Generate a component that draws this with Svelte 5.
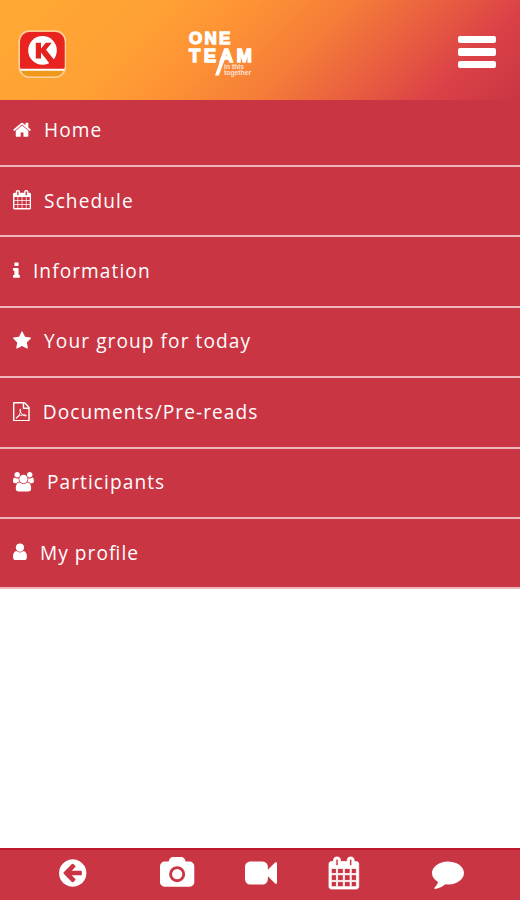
<script lang="ts">
  // Glyphs share a 1792-unit em; x and w give each one's advance box.
  type Icon = { x: number; w: number; d: string };

  const calendar: Icon = {
    x: 64,
    w: 1664,
    d: 'M192 1664h288v-288h-288v288zm352 0h320v-288h-320v288zm-352-352h288v-320h-288v320zm352 0h320v-320h-320v320zm-352-384h288v-288h-288v288zm736 736h320v-288h-320v288zm-384-736h320v-288h-320v288zm768 736h288v-288h-288v288zm-384-352h320v-320h-320v320zm-352-864v-288q0-13-9.5-22.5t-22.5-9.5h-64q-13 0-22.5 9.5t-9.5 22.5v288q0 13 9.5 22.5t22.5 9.5h64q13 0 22.5-9.5t9.5-22.5zm736 864h288v-320h-288v320zm-384-384h320v-288h-320v288zm384 0h288v-288h-288v288zm32-480v-288q0-13-9.5-22.5t-22.5-9.5h-64q-13 0-22.5 9.5t-9.5 22.5v288q0 13 9.5 22.5t22.5 9.5h64q13 0 22.5-9.5t9.5-22.5zm384-64v1280q0 52-38 90t-90 38h-1408q-52 0-90-38t-38-90v-1280q0-52 38-90t90-38h128v-96q0-66 47-113t113-47h64q66 0 113 47t47 113v96h384v-96q0-66 47-113t113-47h64q66 0 113 47t47 113v96h128q52 0 90 38t38 90z',
  };

  const items: { label: string; icon: Icon; squiggle?: string }[] = [
    {
      label: 'Home',
      icon: {
        x: 64,
        w: 1664,
        d: 'M1472 992v480q0 26-19 45t-45 19h-384v-384h-256v384h-384q-26 0-45-19t-19-45v-480q0-1 .5-3t.5-3l575-474 575 474q1 2 1 6zm223-69l-62 74q-8 9-21 11h-3q-13 0-21-7l-692-577-692 577q-12 8-24 7-13-2-21-11l-62-74q-8-10-7-23.5t11-21.5l719-599q32-26 76-26t76 26l244 204v-195q0-14 9-23t23-9h192q14 0 23 9t9 23v408l219 182q10 8 11 21.5t-7 23.5z',
      },
    },
    { label: 'Schedule', icon: calendar },
    {
      label: 'Information',
      icon: {
        x: 576,
        w: 640,
        d: 'M1216 1344v128q0 26-19 45t-45 19h-512q-26 0-45-19t-19-45v-128q0-26 19-45t45-19h64v-384h-64q-26 0-45-19t-19-45v-128q0-26 19-45t45-19h384q26 0 45 19t19 45v576h64q26 0 45 19t19 45zm-128-1152v192q0 26-19 45t-45 19h-256q-26 0-45-19t-19-45v-192q0-26 19-45t45-19h256q26 0 45 19t19 45z',
      },
    },
    {
      label: 'Your group for today',
      icon: {
        x: 64,
        w: 1664,
        d: 'M1728 647q0 22-26 48l-363 354 86 500q1 7 1 20 0 21-10.5 35.5t-30.5 14.5q-19 0-40-12l-449-236-449 236q-22 12-40 12-21 0-31.5-14.5t-10.5-35.5q0-6 2-20l86-500-364-354q-25-27-25-48 0-37 56-46l502-73 225-455q19-41 49-41t49 41l225 455 502 73q56 9 56 46z',
      },
    },
    {
      label: 'Documents/Pre-reads',
      icon: {
        x: 128,
        w: 1536,
        d: 'M1596 380q28 28 48 76t20 88v1152q0 40-28 68t-68 28h-1344q-40 0-68-28t-28-68v-1600q0-40 28-68t68-28h896q40 0 88 20t76 48zm-444-244v376h376q-10-29-22-41l-313-313q-12-12-41-22zm384 1528v-1024h-416q-40 0-68-28t-28-68v-416h-768v1536h1280z',
      },
      squiggle:
        'M440 1500C560 1470 860 960 830 720C820 620 750 640 760 740C780 960 1000 1240 1260 1280C1400 1300 1390 1190 1230 1180C960 1170 660 1250 480 1390C400 1460 400 1510 440 1500Z',
    },
    {
      label: 'Participants',
      icon: {
        x: 0,
        w: 1920,
        d: 'M593 896q-162 5-265 128h-134q-82 0-138-40.5t-56-118.5q0-353 124-353 6 0 43.5 21t97.5 42.5 119 21.5q67 0 133-23-5 37-5 66 0 139 81 256zm1071 637q0 120-73 189.5t-194 69.5h-874q-121 0-194-69.5t-73-189.5q0-53 3.5-103.5t14-109 26.5-108.5 43-97.5 62-81 85.5-53.5 111.5-20q10 0 43 21.5t73 48 107 48 135 21.5 135-21.5 107-48 73-48 43-21.5q61 0 111.5 20t85.5 53.5 62 81 43 97.5 26.5 108.5 14 109 3.5 103.5zm-1024-1277q0 106-75 181t-181 75-181-75-75-181 75-181 181-75 181 75 75 181zm704 384q0 159-112.5 271.5t-271.5 112.5-271.5-112.5-112.5-271.5 112.5-271.5 271.5-112.5 271.5 112.5 112.5 271.5zm576 225q0 78-56 118.5t-138 40.5h-134q-103-123-265-128 81-117 81-256 0-29-5-66 66 23 133 23 59 0 119-21.5t97.5-42.5 43.5-21q124 0 124 353zm-128-609q0 106-75 181t-181 75-181-75-75-181 75-181 181-75 181 75 75 181z',
      },
    },
    {
      label: 'My profile',
      icon: {
        x: 256,
        w: 1280,
        d: 'M1536 1399q0 109-62.5 187t-150.5 78h-854q-88 0-150.5-78t-62.5-187q0-85 8.5-160.5t31.5-152 58.5-131 94-89 134.5-34.5q131 128 313 128t313-128q76 0 134.5 34.5t94 89 58.5 131 31.5 152 8.5 160.5zm-256-887q0 159-112.5 271.5t-271.5 112.5-271.5-112.5-112.5-271.5 112.5-271.5 271.5-112.5 271.5 112.5 112.5 271.5z',
      },
    },
  ];

  const tabs: { name: string; icon: Icon }[] = [
    {
      name: 'back',
      icon: {
        x: 128,
        w: 1536,
        d: 'M1408 960v-128q0-26-19-45t-45-19h-502l189-189q19-19 19-45t-19-45l-91-91q-18-18-45-18t-45 18l-362 362-91 91q-18 18-18 45t18 45l91 91 362 362q18 18 45 18t45-18l91-91q18-18 18-45t-18-45l-189-189h502q26 0 45-19t19-45zm256-64q0 209-103 385.5t-279.5 279.5-385.5 103-385.5-103-279.5-279.5-103-385.5 103-385.5 279.5-279.5 385.5-103 385.5 103 279.5 279.5 103 385.5z',
      },
    },
    {
      name: 'camera',
      icon: {
        x: 0,
        w: 1920,
        d: 'M960 672q119 0 203.5 84.5t84.5 203.5-84.5 203.5-203.5 84.5-203.5-84.5-84.5-203.5 84.5-203.5 203.5-84.5zm704-416q106 0 181 75t75 181v896q0 106-75 181t-181 75h-1408q-106 0-181-75t-75-181v-896q0-106 75-181t181-75h224l51-136q19-49 69.5-84.5t103.5-35.5h512q53 0 103.5 35.5t69.5 84.5l51 136h224zm-704 1152q185 0 316.5-131.5t131.5-316.5-131.5-316.5-316.5-131.5-316.5 131.5-131.5 316.5 131.5 316.5 316.5 131.5z',
      },
    },
    {
      name: 'video',
      icon: {
        x: 0,
        w: 1792,
        d: 'M1792 352v1088q0 42-39 59-13 5-25 5-27 0-45-19l-403-403v166q0 119-84.5 203.5t-203.5 84.5h-704q-119 0-203.5-84.5t-84.5-203.5v-704q0-119 84.5-203.5t203.5-84.5h704q119 0 203.5 84.5t84.5 203.5v165l403-402q18-19 45-19 12 0 25 5 39 17 39 59z',
      },
    },
    { name: 'calendar', icon: calendar },
    {
      name: 'chat',
      icon: {
        x: 0,
        w: 1792,
        d: 'M1792 896q0 174-120 321.5t-326 233-450 85.5q-70 0-145-8-198 175-460 242-49 14-114 22-17 2-30.5-9t-17.5-29v-1q-3-4-.5-12t2-10 4.5-9.5l6-9 7-8.5 8-9q7-8 31-34.5t34.5-38 31-39.5 32.5-51 27-59 26-76q-157-89-247.5-220t-90.5-281q0-130 71-248.5t191-204.5 286-136.5 348-50.5q244 0 450 85.5t326 233 120 321.5z',
      },
    },
  ];
</script>

{#snippet glyph(icon: Icon, squiggle?: string)}
  <svg class="glyph" viewBox="{icon.x} 0 {icon.w} 1792">
    <path d={icon.d} />
    {#if squiggle}<path class="squiggle" d={squiggle} />{/if}
  </svg>
{/snippet}

<div class="app">
  <header>
    <svg class="brand" viewBox="0 0 48 48">
      <path class="red" d="M2 39V11Q2 2 11 2h26.500Q47 2 47 11v28z" />
      <path class="gold" d="M2 40h45Q45.500 47 37 47H11Q3.500 47 2 40z" />
      <path class="rule" d="M2 39.800h45" />
      <rect class="frame" x="1.200" y="1" width="46.300" height="46.300" rx="10.500" />
      <circle class="disc" cx="24.500" cy="20.400" r="14.300" />
      <path class="k" d="M17.800 12.800h5.200v5.600l4.800-5.600h6l-5.800 7 8.500 10.400-4.200 4.200L23 22.500v5.900h-5.200z" />
    </svg>

    <div class="team">
      <span class="one">ONE</span>
      <span class="two">TEAM</span>
      <span class="tag">in this</span>
      <span class="tag">together</span>
      <svg class="slash" viewBox="0 0 14 26"><path d="M1 25.500h3.800L13 3.500 9.500 1z" /></svg>
    </div>

    <div class="burger"><i></i><i></i><i></i></div>
  </header>

  <nav class="menu">
    {#each items as item (item.label)}
      <div class="item">
        {@render glyph(item.icon, item.squiggle)}
        <span class="label">{item.label}</span>
      </div>
    {/each}
  </nav>

  <footer>
    {#each tabs as tab (tab.name)}
      <div class="tab {tab.name}">{@render glyph(tab.icon)}</div>
    {/each}
  </footer>
</div>

<style>
  :global(body) {
    margin: 0;
    background: #fff;
  }
  .app {
    display: flex;
    flex-direction: column;
    width: 520px;
    height: 900px;
    overflow: hidden;
    color: #fff;
    font-family: 'Open Sans', sans-serif;
  }
  header {
    box-sizing: border-box;
    flex: none;
    display: flex;
    align-items: flex-start;
    justify-content: space-between;
    height: 100px;
    padding: 30px 24px 0 18px;
    background: linear-gradient(135deg, #ffa933 0%, #ffa034 28%, #fd9135 42%, #f57d38 57%, #e9603f 71%, #db4247 85%, #c93543 100%);
  }
  .brand {
    width: 48px;
    height: 48px;
  }
  .red {
    fill: #e9231f;
  }
  .gold {
    fill: #f0981c;
  }
  .rule {
    stroke: #fff;
    stroke-width: 2;
  }
  .frame {
    fill: none;
    stroke: #ffd2a0;
    stroke-width: 1.6;
  }
  .disc {
    fill: #fff;
  }
  .k {
    fill: #e3211f;
  }
  .team {
    position: relative;
    display: flex;
    flex-direction: column;
    width: 66px;
    margin-right: 80px;
    padding-top: 1px;
    font-family: 'Liberation Sans', sans-serif;
    font-weight: 700;
    white-space: nowrap;
    -webkit-text-stroke: 1.3px #fff;
  }
  .one {
    font-size: 17px;
    line-height: 16px;
    letter-spacing: 2.300px;
  }
  .two {
    font-size: 18.500px;
    line-height: 17px;
    letter-spacing: 3.500px;
  }
  .tag {
    margin-left: 35px;
    font-size: 6.800px;
    line-height: 5.500px;
    opacity: 0.75;
    -webkit-text-stroke: 0;
  }
  .slash {
    position: absolute;
    left: 25px;
    top: 20px;
    width: 14px;
    height: 26px;
    fill: #fff;
  }
  .burger {
    display: flex;
    flex-direction: column;
    gap: 5px;
    width: 38px;
    padding-top: 6px;
  }
  .burger i {
    height: 7.400px;
    border-radius: 2px;
    background: #fff;
  }
  .menu {
    flex: none;
    display: flex;
    flex-direction: column;
    height: 489px;
  }
  .item {
    box-sizing: border-box;
    flex: none;
    display: flex;
    align-items: center;
    gap: 13px;
    height: 70.400px;
    padding: 0 13px 2px;
    border-bottom: 2px solid #eeb6bb;
    background: #c93543;
    font-size: 19.100px;
    letter-spacing: 1.080px;
    /* letter-spacing drops ligatures unless asked for */
    font-feature-settings: 'liga' 1;
    white-space: nowrap;
  }
  .item:first-child {
    height: 67px;
    padding-bottom: 6px;
  }
  .label {
    padding-top: 1px;
  }
  .glyph {
    flex: none;
    display: block;
    height: 19.500px;
    fill: #fff;
  }
  .squiggle {
    fill: none;
    stroke: #fff;
    stroke-width: 90;
  }
  footer {
    box-sizing: border-box;
    display: flex;
    align-items: flex-start;
    height: 52px;
    margin-top: auto;
    padding: 7px 56px 0 59px;
    border-top: 2px solid #bd1a30;
    background: #c93543;
  }
  .tab .glyph {
    height: 32px;
    overflow: visible;
  }
  .camera {
    margin-left: 74px;
  }
  .video {
    margin-left: 50px;
  }
  .calendar {
    margin-left: 52px;
  }
  .calendar .glyph {
    stroke: #fff;
    stroke-width: 45;
  }
  .chat {
    margin-left: 74px;
  }
</style>
